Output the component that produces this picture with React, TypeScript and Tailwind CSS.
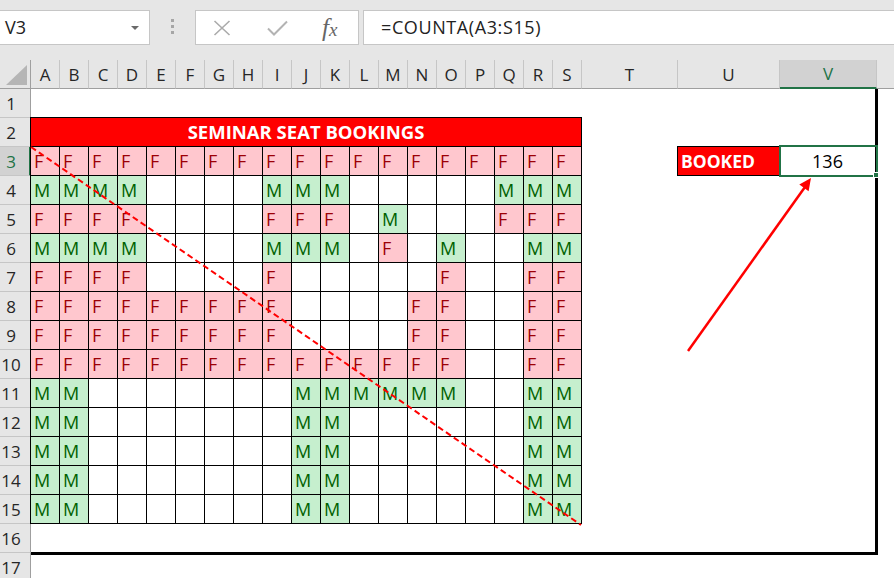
import React from "react";

const COLS = "ABCDEFGHIJKLMNOPQRS".split("");

// seat map for rows 3..15, columns A..S
const SEATS = [
  "FFFFFFFFFFFFFFFFFFF",
  "MMMM....MMM.....MMM",
  "FFFF....FFF.M...FFF",
  "MMMM....MMM.F.M..MM",
  "FFFF....F.....F..FF",
  "FFFFFFFFF....FF..FF",
  "FFFFFFFFF....FF..FF",
  "FFFFFFFFFFFFFFF..FF",
  "MM.......MMMMMM..MM",
  "MM.......MM......MM",
  "MM.......MM......MM",
  "MM.......MM......MM",
  "MM.......MM......MM",
];

const FormulaBar = () => (
  <div className="h-[60px] bg-[#e6e6e6] pt-[10px] flex items-start">
    <div className="w-[150px] h-[35px] bg-white border border-l-0 border-[#c6c6c6] flex items-center justify-between pl-[5px] pr-[10px]">
      <span className="text-[18px] text-[#222]">V3</span>
      <svg width="8" height="4" viewBox="0 0 8 4">
        <path d="M0 0h8L4 4z" fill="#6a6a6a" />
      </svg>
    </div>
    <div className="w-[45px] h-[35px] flex flex-col items-center pt-[9px] gap-[3px]">
      <span className="w-[3px] h-[3px] bg-[#a6a6a6]" />
      <span className="w-[3px] h-[3px] bg-[#a6a6a6]" />
      <span className="w-[3px] h-[3px] bg-[#a6a6a6]" />
    </div>
    <div className="w-[164px] h-[35px] bg-white border border-[#c6c6c6] flex items-center">
      <svg className="ml-[17px]" width="18" height="16" viewBox="0 0 18 16">
        <path d="M1.5 1L16.5 15M16.5 1L1.5 15" stroke="#ababab" strokeWidth="1.6" fill="none" />
      </svg>
      <svg className="ml-[36px]" width="21" height="16" viewBox="0 0 21 16">
        <path d="M1 8.5L7 14.5L20 1.5" stroke="#b3b3b3" strokeWidth="2" fill="none" />
      </svg>
      <span className="ml-[34px] font-['Liberation_Serif',serif] italic text-[#666] text-[25px] leading-none">
        f<span className="text-[19px]">x</span>
      </span>
    </div>
    <div className="ml-[4px] flex-1 h-[35px] bg-white border border-r-0 border-[#c6c6c6] flex items-center pl-[17px]">
      <span className="text-[18px] tracking-[0.6px] text-[#222]">=COUNTA(A3:S15)</span>
    </div>
  </div>
);

const ColumnHeaders = () => (
  <div className="flex h-[29px] bg-[#e6e6e6] text-[17px] leading-[28px] text-[#262626]">
    <div className="relative w-[31px] h-[29px] border-r border-b border-r-[#9f9f9f] border-b-[#9f9f9f]">
      <svg className="absolute left-[6px] top-[5px]" width="21" height="20" viewBox="0 0 21 20">
        <path d="M21 0V20H0z" fill="#b5b5b5" />
      </svg>
    </div>
    {COLS.map((c) => (
      <div key={c} className="w-[29px] h-[29px] border-r border-r-[#c6c6c6] border-b border-b-[#9f9f9f] text-center pt-[1px]">
        {c}
      </div>
    ))}
    <div className="w-[96px] h-[29px] border-r border-r-[#c6c6c6] border-b border-b-[#9f9f9f] text-center pt-[1px]">T</div>
    <div className="w-[102px] h-[29px] border-r border-r-[#c6c6c6] border-b border-b-[#9f9f9f] text-center pt-[1px]">U</div>
    <div className="w-[97px] h-[29px] bg-[#d2d2d2] border-r border-r-[#c6c6c6] border-b-2 border-b-[#217346] text-center text-[#217346]">V</div>
    <div className="flex-1 h-[29px] border-b border-b-[#9f9f9f]" />
  </div>
);

const RowHeaders = () => (
  <div className="w-[31px] shrink-0 bg-[#e6e6e6] text-[17px] leading-[28px] text-[#262626]">
    {Array.from({ length: 17 }, (_, i) => i + 1).map((n) =>
      n === 3 ? (
        <div key={n} className="h-[29px] bg-[#d2d2d2] border-b border-b-[#c6c6c6] border-r-2 border-r-[#217346] pt-[1px]">
          <div className="w-[22px] text-center text-[#217346]">{n}</div>
        </div>
      ) : (
        <div key={n} className="h-[29px] border-b border-b-[#c6c6c6] border-r border-r-[#9f9f9f] pt-[1px]">
          <div className="w-[22px] text-center">{n}</div>
        </div>
      )
    )}
  </div>
);

const Seat = ({ v }: { v: string }) => {
  if (v === "F")
    return <div className="w-[29px] h-[29px] border-r border-b border-black bg-[#ffc7ce] text-[#9c0006] pl-[3px]">F</div>;
  if (v === "M")
    return <div className="w-[29px] h-[29px] border-r border-b border-black bg-[#c6efce] text-[#006100] pl-[3px]">M</div>;
  return <div className="w-[29px] h-[29px] border-r border-b border-black bg-white" />;
};

const Sheet = () => (
  <div className="w-[847px] h-[466px] border-r-[3px] border-b-[3px] border-black bg-white">
    <div className="h-[28px]" />
    <div className="flex">
      <div className="-ml-px w-[552px] border-t border-l border-black text-[18px] leading-[28px]">
        <div className="h-[29px] bg-[#ff0000] border-r border-b border-black text-center text-white font-bold text-[18.5px]">
          SEMINAR SEAT BOOKINGS
        </div>
        {SEATS.map((row, r) => (
          <div key={r} className="flex">
            {row.split("").map((v, c) => (
              <Seat key={c} v={v} />
            ))}
          </div>
        ))}
      </div>
      <div className="flex-1">
        <div className="h-[29px]" />
        <div className="flex">
          <div className="w-[95px]" />
          <div className="w-[103px] h-[30px] bg-[#ff0000] border border-black pl-[3px] text-[17.5px] leading-[28px] font-bold text-white">
            BOOKED
          </div>
          <div className="relative w-[95px] h-[30px] text-center text-[18px] leading-[30px] text-black">
            136
            <div className="absolute -top-px -left-px -bottom-px -right-[3px] border-2 border-[#217346]" />
            <div className="absolute -right-[4px] -bottom-[2px] w-[6px] h-[6px] bg-[#217346] border border-white" />
          </div>
        </div>
      </div>
    </div>
  </div>
);

const Overlay = () => (
  <svg className="absolute left-0 top-0 pointer-events-none" width="894" height="578" viewBox="0 0 894 578">
    <line x1="31" y1="147" x2="581" y2="525" stroke="#ff0000" strokeWidth="2" strokeDasharray="6 3.5" />
    <line x1="688" y1="351" x2="805" y2="187" stroke="#ff0000" strokeWidth="2.5" />
    <path d="M811 178L808.6 191.2L799.3 184.6z" fill="#ff0000" />
  </svg>
);

export default function App() {
  return (
    <div className="relative w-[894px] h-[578px] overflow-hidden bg-white font-['Open_Sans',sans-serif]">
      <FormulaBar />
      <ColumnHeaders />
      <div className="flex">
        <RowHeaders />
        <Sheet />
      </div>
      <Overlay />
    </div>
  );
}
